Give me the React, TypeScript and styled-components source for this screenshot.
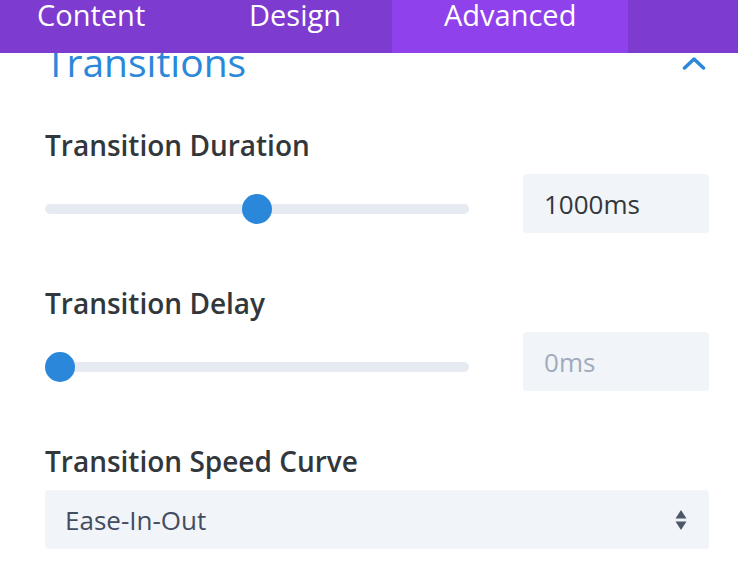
import { FC } from "react"
import styled, { createGlobalStyle } from "styled-components"

const GlobalStyle = createGlobalStyle`
  html, body {
    margin: 0;
    padding: 0;
    background: #fff;
  }
  body {
    font-family: "Open Sans", "Noto Sans", sans-serif;
    -webkit-font-smoothing: antialiased;
  }
`

const Panel = styled.div`
  width: 738px;
  height: 578px;
  overflow: hidden;
  background: #fff;
`

const TabBar = styled.nav`
  position: relative;
  z-index: 1;
  display: flex;
  height: 53px;
  background: #7e3bd0;
`

const Tab = styled.div<{ $width: number; $pad: number; $active?: boolean }>`
  width: ${({ $width }) => $width}px;
  padding-left: ${({ $pad }) => $pad}px;
  box-sizing: border-box;
  background: ${({ $active }) => ($active ? "#8f42ec" : "transparent")};
  color: #fff;
  font-size: 29px;
  line-height: 30px;
  font-weight: 400;
  margin-top: -5px;
  padding-top: 5px;
`

const Body = styled.div`
  padding: 0 29px 0 45px;
`

const ToggleHeader = styled.div`
  display: flex;
  align-items: center;
  justify-content: space-between;
  margin-top: -13px;
  height: 44px;
`

const ToggleTitle = styled.h2`
  margin: 0;
  font-size: 39px;
  line-height: 44px;
  font-weight: 400;
  color: #2b87da;
`

const Chevron = styled.svg`
  width: 24px;
  height: 14px;
  margin-right: 3px;
  margin-top: 2px;
`

const Field = styled.div`
  display: flex;
  flex-direction: column;
  margin-top: 43px;

  & + & {
    margin-top: 52px;
  }
`

const Label = styled.label`
  font-size: 28px;
  line-height: 36px;
  font-weight: 600;
  color: #32373c;
`

const Row = styled.div`
  display: flex;
  align-items: center;
  gap: 54px;
  margin-top: 11px;
  height: 59px;
`

const Track = styled.div`
  position: relative;
  flex: 1;
  height: 10px;
  border-radius: 5px;
  background: #e6ebf1;
  margin-top: 10px;
`

const Thumb = styled.span`
  position: absolute;
  top: 50%;
  width: 30px;
  height: 30px;
  margin: -15px 0 0 -15px;
  border-radius: 50%;
  background: #2b87da;
`

const ValueBox = styled.div<{ $muted?: boolean }>`
  width: 186px;
  height: 59px;
  box-sizing: border-box;
  padding-left: 21px;
  display: flex;
  align-items: center;
  border-radius: 4px;
  background: #f1f4f9;
  font-size: 26px;
  font-weight: 500;
  color: ${({ $muted }) => ($muted ? "#a0abbb" : "#32373c")};
`

const Select = styled.div`
  margin-top: 11px;
  height: 59px;
  box-sizing: border-box;
  padding: 0 22px 0 20px;
  display: flex;
  align-items: center;
  justify-content: space-between;
  border-radius: 4px;
  background: #f1f4f9;
  font-size: 26px;
  font-weight: 500;
  color: #434d5f;
`

interface SliderFieldProps {
  label: string
  value: number
  max: number
  muted?: boolean
}

const SliderField: FC<SliderFieldProps> = ({ label, value, max, muted }) => {
  const pct = value / max
  return (
    <Field>
      <Label>{label}</Label>
      <Row>
        <Track>
          <Thumb style={{ left: `calc(15px + (100% - 30px) * ${pct})` }} />
        </Track>
        <ValueBox $muted={muted}>{value}ms</ValueBox>
      </Row>
    </Field>
  )
}

export default function App() {
  return (
    <Panel>
      <GlobalStyle />
      <TabBar>
        <Tab $width={210} $pad={37}>Content</Tab>
        <Tab $width={182} $pad={39}>Design</Tab>
        <Tab $width={236} $pad={52} $active>
          Advanced
        </Tab>
      </TabBar>
      <Body>
        <ToggleHeader>
          <ToggleTitle>Transitions</ToggleTitle>
          <Chevron viewBox="0 0 24 14">
            <path
              d="M2.5 12 L12 3 L21.5 12"
              fill="none"
              stroke="#2b87da"
              strokeWidth="3.5"
              strokeLinecap="round"
              strokeLinejoin="round"
            />
          </Chevron>
        </ToggleHeader>
        <SliderField label="Transition Duration" value={1000} max={2000} />
        <SliderField label="Transition Delay" value={0} max={2000} muted />
        <Field>
          <Label>Transition Speed Curve</Label>
          <Select>
            <span>Ease-In-Out</span>
            <svg width="12" height="22" viewBox="0 0 12 22">
              <path d="M6 1 L11.5 9.5 H0.5 Z" fill="#4c5768" />
              <path d="M6 21 L11.5 12.5 H0.5 Z" fill="#4c5768" />
            </svg>
          </Select>
        </Field>
      </Body>
    </Panel>
  )
}
